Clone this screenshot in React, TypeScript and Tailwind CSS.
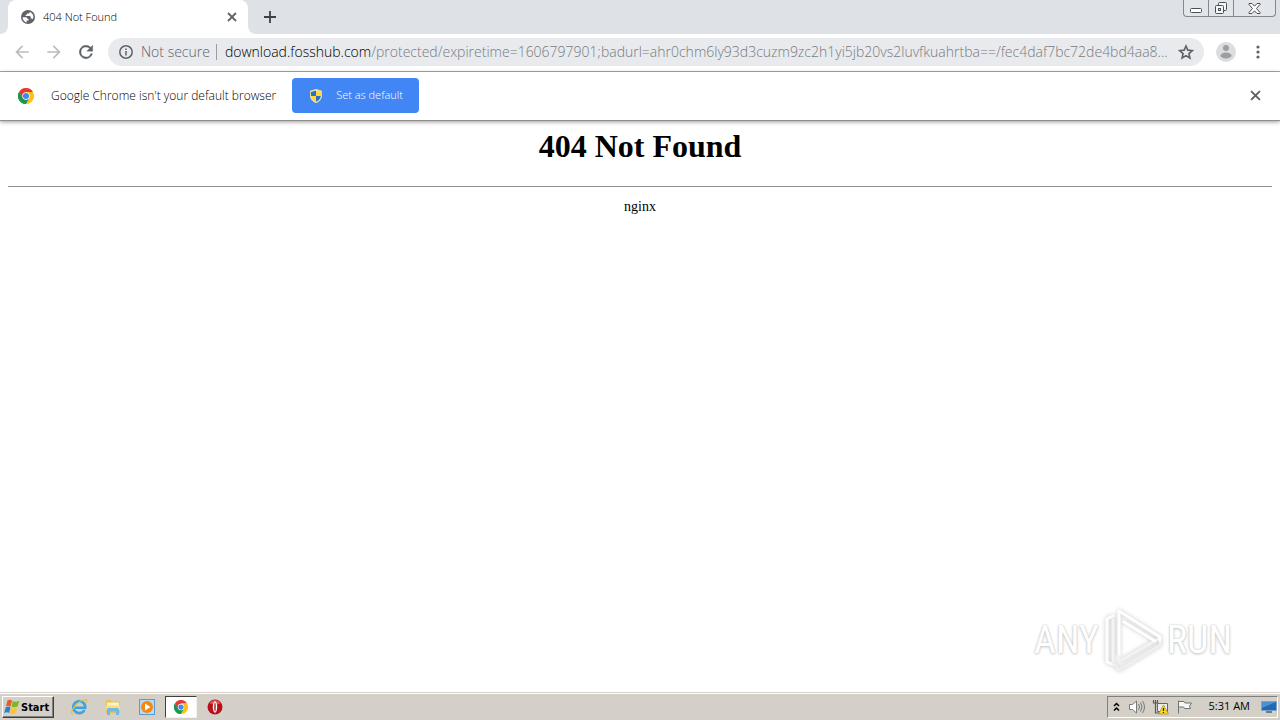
import type { ReactNode } from "react";

const URL_HOST = "download.fosshub.com";
const URL_PATH =
  "/protected/expiretime=1606797901;badurl=ahr0chm6ly93d3cuzm9zc2h1yi5jb20vs2luvfkuahrtba==/fec4daf7bc72de4bd4aa8...";

function ChromeLogo({ className }: { className: string }) {
  return (
    <svg viewBox="0 0 48 48" className={className} aria-hidden="true">
      <path d="M24 24 3.2 12A24 24 0 0 1 44.8 12H24Z" fill="#e33b2e" />
      <path d="M24 24 44.8 12A24 24 0 0 1 24 48L34.4 30Z" fill="#fbc116" />
      <path d="M24 24 24 48A24 24 0 0 1 3.2 12L13.6 30Z" fill="#1a9850" />
      <path d="M24 12H44.8L34.4 30 24 24Z" fill="#fbc116" />
      <path d="M13.6 30 3.2 12 24 12V24Z" fill="#e33b2e" />
      <path d="M3.2 12 13.6 30 24 36 34.4 30 24 48A24 24 0 0 1 3.2 12Z" fill="#1a9850" />
      <circle cx="24" cy="24" r="11" fill="#fff" />
      <circle cx="24" cy="24" r="9" fill="#4285f4" />
    </svg>
  );
}

function CloseIcon({ className }: { className: string }) {
  return (
    <svg viewBox="0 0 10 10" className={className} aria-hidden="true">
      <path d="M1 1 9 9M9 1 1 9" stroke="currentColor" strokeWidth="1.8" fill="none" />
    </svg>
  );
}

function ArrowIcon({ className }: { className: string }) {
  return (
    <svg viewBox="0 0 24 24" className={className} fill="currentColor" aria-hidden="true">
      <path d="M20 11H7.8l5.6-5.6L12 4l-8 8 8 8 1.4-1.4L7.8 13H20z" />
    </svg>
  );
}

function TabStrip() {
  return (
    <div className="flex h-[34px] bg-[#dee1e6]">
      <div className="w-2 bg-white">
        <div className="h-full rounded-br-lg bg-[#dee1e6]" />
      </div>
      <div className="flex w-60 items-center rounded-t-lg bg-white pr-[11px] pl-[13px]">
        <svg viewBox="0 0 14 14" className="size-[14px]" aria-hidden="true">
          <circle cx="7" cy="7" r="7" fill="#5f6368" />
          <path d="M1.6 7.2h3.2q1.8 0 1.8 1.7h1v1.5H5.7v2A5.5 5.5 0 0 1 1.6 7.2Z" fill="#fff" />
          <path d="M8.7 1.8v.5q0 1.2-1.2 1.2H6v1.3H4.6v1.2h4q1.1 0 1.1 1.1v1.3h1.5l.7.8a5.5 5.5 0 0 0-3.2-7.4Z" fill="#fff" />
        </svg>
        <span className="ml-2 flex-1 text-[11px] leading-4 font-light text-black">404 Not Found</span>
        <button type="button" aria-label="Close tab" className="text-[#5f6368]">
          <CloseIcon className="size-[10px]" />
        </button>
      </div>
      <div className="w-2 bg-white">
        <div className="h-full rounded-bl-lg bg-[#dee1e6]" />
      </div>
      <button type="button" aria-label="New tab" className="ml-2 text-[#3c4043]">
        <svg viewBox="0 0 12 12" className="size-3" aria-hidden="true">
          <path d="M6 0v12M0 6h12" stroke="currentColor" strokeWidth="1.8" />
        </svg>
      </button>
      <div className="mr-1 ml-auto flex h-[17px] rounded-b border border-t-0 border-[#85888d] bg-[#e2e5e9] text-[#4b4f54]">
        <button type="button" aria-label="Minimize" className="flex w-6 items-end justify-center pb-[3px]">
          <svg viewBox="0 0 12 5" className="h-[5px] w-3" aria-hidden="true">
            <rect x=".5" y=".5" width="11" height="4" rx="1" fill="#fff" stroke="currentColor" />
          </svg>
        </button>
        <button type="button" aria-label="Restore" className="flex w-[26px] items-center justify-center border-x border-[#85888d]">
          <svg viewBox="0 0 14 14" className="size-[14px]" fill="#f4f5f6" stroke="currentColor" aria-hidden="true">
            <rect x="4.5" y="1.5" width="8" height="8" rx="1" />
            <rect x="1.5" y="4.5" width="8" height="8" rx="1" />
            <rect x="4.5" y="7.5" width="2" height="2" />
          </svg>
        </button>
        <button type="button" aria-label="Close" className="flex w-[41px] items-center justify-center">
          <svg viewBox="0 0 13 11" className="h-[11px] w-[13px]" aria-hidden="true">
            <path d="M1 .5h3l2.5 2.7L9 .5h3v1L8.5 5.5l3.5 4v1H9L6.5 7.8 4 10.5H1v-1l3.5-4L1 1.5Z" fill="#fff" stroke="currentColor" />
          </svg>
        </button>
      </div>
    </div>
  );
}

function Toolbar() {
  return (
    <div className="flex h-[38px] items-center border-b border-[#a9abae] bg-white pr-5 pb-px pl-3 text-[#5f6368]">
      <button type="button" aria-label="Back" className="text-[#babcbe]">
        <ArrowIcon className="size-5" />
      </button>
      <button type="button" aria-label="Forward" className="ml-3 text-[#babcbe]">
        <ArrowIcon className="size-5 rotate-180" />
      </button>
      <button type="button" aria-label="Reload" className="ml-3">
        <svg viewBox="0 0 24 24" className="size-5" fill="currentColor" aria-hidden="true">
          <path d="M17.65 6.35A8 8 0 1 0 19.73 14h-2.08A6 6 0 1 1 12 6c1.66 0 3.14.69 4.22 1.78L13 11h7V4z" stroke="currentColor" strokeWidth=".5" />
        </svg>
      </button>
      <div className="ml-3 flex h-7 min-w-0 flex-1 items-center rounded-full bg-[#e8eaed] pr-[10px] pl-[11px] text-sm">
        <svg viewBox="0 0 14 14" className="size-[14px] shrink-0" fill="none" stroke="currentColor" strokeWidth="1.5" aria-hidden="true">
          <circle cx="7" cy="7" r="6.2" />
          <path d="M7 6v4.5M7 3.5V5" />
        </svg>
        <span className="ml-2 shrink-0 font-light">Not secure</span>
        <span className="ml-[6px] h-4 w-px shrink-0 bg-[#9a9da1]" />
        <span className="ml-2 min-w-0 flex-1 overflow-hidden font-light whitespace-nowrap text-[#767b80]">
          <span className="text-black">{URL_HOST}</span>
          {URL_PATH}
        </span>
        <button type="button" aria-label="Bookmark this page" className="shrink-0">
          <svg viewBox="0 0 24 24" className="size-4" fill="none" stroke="currentColor" strokeWidth="2.4" aria-hidden="true">
            <path d="m12 3 2.7 6.2 6.8.6-5.1 4.5 1.5 6.7-5.9-3.5L6.1 21l1.5-6.7-5.1-4.5 6.8-.6z" />
          </svg>
        </button>
      </div>
      <button type="button" aria-label="Profile" className="ml-3">
        <svg viewBox="0 0 20 20" className="size-5" aria-hidden="true">
          <circle cx="10" cy="10" r="10" fill="#dcddde" />
          <circle cx="10" cy="6" r="3" fill="#9c9ea0" />
          <ellipse cx="10" cy="13.5" rx="5.5" ry="3" fill="#9c9ea0" />
        </svg>
      </button>
      <button type="button" aria-label="Menu" className="ml-5">
        <svg viewBox="0 0 4 14" className="h-[14px] w-1" fill="currentColor" aria-hidden="true">
          <circle cx="2" cy="2" r="1.6" />
          <circle cx="2" cy="7" r="1.6" />
          <circle cx="2" cy="12" r="1.6" />
        </svg>
      </button>
    </div>
  );
}

function ShieldIcon() {
  return (
    <svg viewBox="0 0 16 16" className="size-4" aria-hidden="true">
      <path d="M8 1 14 3v4c0 4-2.5 6.5-6 8-3.5-1.5-6-4-6-8V3Z" fill="#e9eef2" />
      <path d="M8 2.5V8H3V4Z" fill="#2b6fc4" />
      <path d="M8 2.5V8h5V4Z" fill="#ffd83a" />
      <path d="M3 8h5v5.8C5.2 12.5 3.3 10.7 3 8Z" fill="#ffd83a" />
      <path d="M13 8H8v5.8C10.8 12.5 12.7 10.7 13 8Z" fill="#2b6fc4" />
      <path d="M8 1.5 13.5 3.3V7c0 3.7-2.3 6-5.5 7.500C4.800 13 2.500 10.700 2.500 7V3.300Z" fill="none" stroke="#e0d88c" strokeWidth="1" />
    </svg>
  );
}

function InfoBar() {
  return (
    <div className="z-10 flex h-[49px] items-center border-b border-[#8e8e8e] bg-white pr-[19px] pb-px pl-[18px] shadow-[0_1px_4px_rgba(0,0,0,0.4)]">
      <ChromeLogo className="size-4" />
      <span className="ml-[17px] text-xs font-light text-black">Google Chrome isn't your default browser</span>
      <button type="button" className="ml-4 flex h-[35px] items-center rounded bg-[#4285f4] px-4 text-[11px] font-light text-white">
        <ShieldIcon />
        <span className="ml-3">Set as default</span>
      </button>
      <button type="button" aria-label="Dismiss" className="ml-auto text-[#5f6368]">
        <CloseIcon className="size-[11px]" />
      </button>
    </div>
  );
}

function Watermark() {
  return (
    <div className="absolute right-12 bottom-[18px] flex items-center gap-[3px] font-['Roboto_Condensed','Roboto',sans-serif] text-[38px] leading-none text-white [text-shadow:0_0_2px_#c0c0c0,0_1px_3px_#cccccc]">
      <span>ANY</span>
      <svg
        viewBox="0 0 62 68"
        className="h-[68px] w-[62px] drop-shadow-[0_0_2px_#c4c4c4]"
        fill="none"
        strokeLinejoin="round"
        strokeLinecap="round"
        aria-hidden="true"
      >
        <path d="M11 10 5 13v43l8 3" stroke="#fdfdfd" strokeWidth="3" />
        <path d="M11 14v41" stroke="#f4f4f4" strokeWidth="3" />
        <path d="m11 57 6 7 41-25v-5" stroke="#efefef" strokeWidth="3" />
        <path d="m18 55 38-22" stroke="#f2f2f2" strokeWidth="3" />
        <path d="M17 48V5l41 26v3" stroke="#fff" strokeWidth="3" />
        <path d="m22 16 31 19" stroke="#fff" strokeWidth="3" />
      </svg>
      <span>RUN</span>
    </div>
  );
}

function TaskButton({ label, active, children }: { label: string; active?: boolean; children: ReactNode }) {
  return (
    <button
      type="button"
      aria-label={label}
      className={`flex h-[22px] w-8 items-center justify-center ${
        active ? "border border-t-[#404040] border-r-[#f4f2ee] border-b-[#f4f2ee] border-l-[#404040] bg-white" : ""
      }`}
    >
      {children}
    </button>
  );
}

function Taskbar() {
  return (
    <div className="flex h-7 items-center border-t border-[#d4d0c8] bg-[#d4d0c8] px-[2px] text-black shadow-[inset_0_1px_0_#ffffff]">
      <button
        type="button"
        className="flex h-[22px] w-[52px] items-center gap-px border border-t-white border-r-[#404040] border-b-[#404040] border-l-white pl-px text-[11px] font-bold shadow-[inset_-1px_-1px_0_#808080]"
      >
        <svg viewBox="0 0 16 16" className="size-4 shrink-0" aria-hidden="true">
          <path d="M3.5 1.5Q6 0 8 1.5L6.8 7.3Q4.8 6 2 7.3Z" fill="#ed5b24" />
          <path d="M8.8 2Q11.5 3.5 15.5 1.8L13.5 7.5Q10.5 9 7.6 7.7Z" fill="#79b82c" />
          <path d="M1.8 8.2Q4.5 7 6.5 8.3L5.2 14Q3 12.7.2 14Z" fill="#2c80cf" />
          <path d="M7.4 8.7Q10.5 10 13.2 8.5L11.8 14Q9 15.8 6 14.4Z" fill="#fcc62e" />
        </svg>
        <span className="pt-[2px] font-['DejaVu_Sans_Condensed','DejaVu_Sans',sans-serif] leading-4">Start</span>
      </button>
      <div className="ml-[9px] flex items-center gap-[2px]">
        <TaskButton label="Internet Explorer">
          <svg viewBox="0 0 18 18" className="size-[18px]" fill="none" aria-hidden="true">
            <path d="M14.5 12A6 6 0 1 1 15.2 9.7H5" stroke="#3aa5e0" strokeWidth="2.6" />
            <path d="M2.5 16.5C-1 13 9 2 15.5 1.5c2 0 1.5 2 .5 3.5" stroke="#e8bb42" strokeWidth="1.2" />
          </svg>
        </TaskButton>
        <TaskButton label="Windows Explorer">
          <svg viewBox="0 0 18 18" className="size-[18px]" aria-hidden="true">
            <path d="M2 2h5l1 1.5h8V15H2Z" fill="#e5c35a" />
            <path d="M3 4.5h12V9H3Z" fill="#fff3b7" />
            <path d="M2 7.5h14V12H2Z" fill="#f5dc86" />
            <path d="M3 17V11.5q0-1.5 1.5-1.5h9q1.5 0 1.5 1.5V17h-3v-3.5H6V17Z" fill="#73b8e3" />
          </svg>
        </TaskButton>
        <TaskButton label="Windows Media Player">
          <svg viewBox="0 0 18 18" className="size-[18px]" aria-hidden="true">
            <rect x="1.5" y="1.5" width="15" height="15" fill="#b9d9f1" stroke="#5c9bd0" />
            <circle cx="9" cy="9" r="6" fill="#f18a13" />
            <path d="m7 5.5 5.5 3.5L7 12.5Z" fill="#fff" />
          </svg>
        </TaskButton>
        <TaskButton label="Google Chrome" active>
          <ChromeLogo className="size-[14px]" />
        </TaskButton>
        <TaskButton label="Opera">
          <svg viewBox="0 0 16 16" className="size-4" aria-hidden="true">
            <circle cx="8" cy="8" r="7.5" fill="#b80f18" />
            <path d="M2 4Q8-2 14 4 8 7 2 4Z" fill="#d95052" />
            <ellipse cx="8" cy="8" rx="2.2" ry="5.8" fill="#fff" />
            <ellipse cx="8" cy="8" rx=".7" ry="4.5" fill="#9e1118" />
          </svg>
        </TaskButton>
      </div>
      <div className="ml-auto flex h-[22px] items-center border border-t-[#808080] border-r-white border-b-white border-l-[#808080] pl-[5px] text-[11px]">
        <svg viewBox="0 0 7 10" className="h-[10px] w-[7px]" fill="none" stroke="#000" strokeWidth="1.5" aria-hidden="true">
          <path d="m1 4 2.5-2.5L6 4M1 8.5 3.500 6 6 8.5" />
        </svg>
        <svg viewBox="0 0 18 16" className="ml-2 h-4 w-[18px]" fill="#fff" stroke="#77797b" aria-hidden="true">
          <path d="M1.5 5.5h3l4-3.5v12l-4-3.5h-3Z" />
          <path d="M10.5 5q2 3 0 6M12.5 3.5q3 4.5 0 9M14.5 2q4 6 0 12" fill="none" />
        </svg>
        <svg viewBox="0 0 17 16" className="ml-[6px] h-4 w-[17px]" aria-hidden="true">
          <path d="M5.5 4.5h10v8h-10Z" fill="#e9edef" stroke="#60666b" />
          <path d="M1.5 1v3h4V1M3.5 1v3M3.5 4v10h5" fill="none" stroke="#55595c" strokeWidth="1.2" />
          <path d="m11.5 6 5 9h-10Z" fill="#ffd51f" stroke="#a98c13" strokeWidth=".7" />
          <path d="M11.5 9v3M11.5 13v1" stroke="#222" strokeWidth="1.2" />
        </svg>
        <svg viewBox="0 0 17 16" className="ml-[7px] h-4 w-[17px]" fill="#f6f6f4" stroke="#707476" aria-hidden="true">
          <path d="M2.5 1.5v13M2.5 2.5H8l1 1.5h6.5l-2 3 1 2.5H8.5l-1-1.5h-5" />
        </svg>
        <span className="ml-4">5:31 AM</span>
        <svg viewBox="0 0 16 14" className="ml-[11px] h-[14px] w-4" aria-hidden="true">
          <path d="M.5 1.5h15v9H.5Z" fill="#2467b5" stroke="#76a5cf" />
          <path d="M1 2h14L1 8Z" fill="#4c91d1" />
          <path d="M5 11h6v2H5Z" fill="#6b7b8b" />
        </svg>
      </div>
    </div>
  );
}

export default function App() {
  return (
    <div className="flex min-h-screen flex-col bg-white font-['Open_Sans','Noto_Sans',sans-serif]">
      <TabStrip />
      <Toolbar />
      <InfoBar />
      <main className="relative flex-1 px-2 pt-[7px] text-center font-['Liberation_Serif',serif] text-black">
        <h1 className="text-[32px] leading-9 font-bold">404 Not Found</h1>
        <hr className="mt-[22px] border-t border-[#929292]" />
        <p className="mt-[11px] text-sm leading-[18px]">nginx</p>
        <Watermark />
      </main>
      <Taskbar />
    </div>
  );
}
